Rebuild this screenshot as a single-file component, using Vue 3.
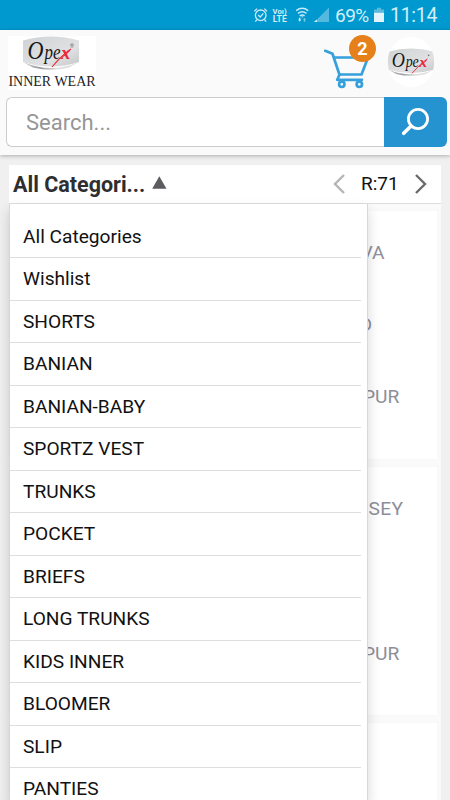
<script setup>
const categories = [
  'All Categories', 'Wishlist', 'SHORTS', 'BANIAN', 'BANIAN-BABY', 'SPORTZ VEST', 'TRUNKS',
  'POCKET', 'BRIEFS', 'LONG TRUNKS', 'KIDS INNER', 'BLOOMER', 'SLIP', 'PANTIES',
]
</script>

<template>
  <div class="screen">
    <div class="status">
      <svg class="status-icons" width="92" height="30" viewBox="0 0 92 30">
        <g fill="none" stroke="#c9eaf7" stroke-width="1.3">
          <circle cx="10.7" cy="15.3" r="5.3" />
          <path d="M8.2 15l2 2 3.2-3.600M4.400 11.200l2.700-2.600M17 11.200l-2.700-2.600M7 19.600l-1.700 2.100M14.400 19.600l1.700 2.100" />
          <path d="M46.200 10.600q6-4.600 12 0M48 13.300q4.200-3.200 8.400 0M49.800 15.900q2.400-1.900 4.800 0" stroke-width="1.500" />
        </g>
        <path d="M51 16.400h2.400l-1.200 1.400zM48 19.400h1v-1.600h1.400v1.600h1l-1.700 2.400z" fill="#c9eaf7" />
        <path d="M53 19.800l1.500-2 1.500 2h-.8v2h-1.400v-2z" fill="#7cc8e6" />
        <path d="M79 7.500V22H64.500z" fill="#55b8de" />
        <path d="M64 22l2.800-2.600V22z" fill="#e2f5fc" />
        <text class="volte" x="22.600" y="14" textLength="14" lengthAdjust="spacingAndGlyphs">Voı)</text>
        <text class="lte" x="22.800" y="22" textLength="14" lengthAdjust="spacingAndGlyphs">LTE</text>
      </svg>
      <span class="percent">69%</span>
      <svg class="battery" width="10" height="30" viewBox="0 0 10 30">
        <path d="M3 7.800h4v1.600H10V13H0V9.400h3z" fill="#5bb9dc" />
        <path d="M0 12.800h10V22H0z" fill="#e2f5fc" />
      </svg>
      <span class="clock">11:14</span>
    </div>

    <header class="header">
      <div class="brand-row">
        <div class="brand">
          <svg class="brand-logo" width="56" height="34" viewBox="0 0 56 34">
            <defs>
              <linearGradient id="plate" x1="0" y1="0" x2="1" y2="1">
                <stop offset="0" stop-color="#d0d3d5" />
                <stop offset=".65" stop-color="#dfe1e2" />
                <stop offset="1" stop-color="#c4c6c8" />
              </linearGradient>
              <linearGradient id="rim" x1="0" y1="0" x2="1" y2="0">
                <stop offset="0" stop-color="#c4c6c8" />
                <stop offset=".3" stop-color="#97999b" />
                <stop offset=".6" stop-color="#dcdedf" />
              </linearGradient>
            </defs>
            <path d="M0 26Q28 38 56 26L46 31.500Q28 36 10 31.500z" fill="url(#rim)" />
            <path d="M0 4.500Q28-3.500 56 4.500V26Q28 35 0 26z" fill="url(#plate)" />
            <path d="M48 13Q39 19 29 31" fill="none" stroke="#ed2b36" stroke-width="1.100" />
            <g class="wordmark">
              <text x="4.500" y="23" class="initial" textLength="16" lengthAdjust="spacingAndGlyphs">O</text>
              <text x="21.500" y="22.500" textLength="16" lengthAdjust="spacingAndGlyphs">pe</text>
              <text x="38" y="22.500" class="red">x</text>
            </g>
            <text x="47" y="12" class="registered">®</text>
          </svg>
          <span class="brand-name">INNER WEAR</span>
        </div>

        <div class="actions">
          <div class="cart">
            <svg width="50" height="56" viewBox="0 0 50 56">
              <g fill="none" stroke="#35a0dc" stroke-width="2.700" stroke-linecap="round" stroke-linejoin="round">
                <path d="M1.200 17.800l7.300 3 7 21-2.300 5H38" />
                <path d="M10.500 24.500h33.500l-6.500 17h-22" />
                <circle cx="17.800" cy="51.300" r="2.700" />
                <circle cx="35.300" cy="51.300" r="2.700" />
              </g>
            </svg>
            <span class="badge">2</span>
          </div>
          <div class="avatar">
            <svg width="46" height="28" viewBox="0 0 56 34">
              <path d="M0 26Q28 38 56 26L46 31.500Q28 36 10 31.500z" fill="url(#rim)" />
              <path d="M0 4.500Q28-3.500 56 4.500V26Q28 35 0 26z" fill="url(#plate)" />
              <path d="M48 13Q39 19 29 31" fill="none" stroke="#ed2b36" stroke-width="1.100" />
              <g class="wordmark">
                <text x="4.500" y="23" class="initial" textLength="16" lengthAdjust="spacingAndGlyphs">O</text>
                <text x="21.500" y="22.500" textLength="16" lengthAdjust="spacingAndGlyphs">pe</text>
                <text x="38" y="22.500" class="red">x</text>
              </g>
              <circle cx="49.500" cy="9" r="1" fill="#777" />
            </svg>
          </div>
        </div>
      </div>

      <div class="search">
        <div class="search-field">Search...</div>
        <button class="search-button" aria-label="Search">
          <svg width="30" height="30" viewBox="0 0 30 30">
            <circle cx="17" cy="12" r="9.600" fill="none" stroke="#fff" stroke-width="2.800" />
            <path d="M10.100 19L2.700 26.300" stroke="#fff" stroke-width="3.600" stroke-linecap="round" />
          </svg>
        </button>
      </div>
    </header>

    <main class="content">
      <div class="toolbar">
        <span class="selected">All Categori...</span>
        <svg class="caret" width="15" height="13" viewBox="0 0 15 13"><path d="M7.300.3L14.500 12.800H.2z" fill="#5c5c60" /></svg>
        <div class="pager">
          <svg width="12" height="20" viewBox="0 0 12 20"><path d="M11 1L2 10l9 9" fill="none" stroke="#b5b5b5" stroke-width="2.400" /></svg>
          <span>R:71</span>
          <svg width="12" height="20" viewBox="0 0 12 20"><path d="M1 1l9 9-9 9" fill="none" stroke="#6b6b6b" stroke-width="2.400" /></svg>
        </div>
      </div>

      <div class="panel">
        <div class="cards">
          <section class="card">
            <span class="va">VA</span><span class="d">D</span><span class="pur">PUR</span>
          </section>
          <section class="card">
            <span class="sey">SEY</span><span class="pur">PUR</span>
          </section>
          <section class="card"></section>
        </div>
        <ul class="menu">
          <li v-for="name in categories" :key="name">{{ name }}</li>
        </ul>
      </div>
    </main>
  </div>
</template>

<style>
body { margin: 0; overflow: hidden; }
</style>

<style scoped>
* { box-sizing: border-box; }
.screen {
  width: 450px; height: 800px; overflow: hidden;
  display: flex; flex-direction: column;
  background: #f0f0f0; color: #111;
  font-family: Roboto, "Liberation Sans", sans-serif;
}
.status {
  flex: none; height: 30px; padding-left: 250px;
  display: flex; align-items: center;
  background: #0099cf; color: #d3eff9; font-size: 19px; line-height: 30px;
}
.status-icons, .battery { flex: none; display: block; }
.volte { font-size: 7.5px; font-weight: 700; fill: #d3eff9; }
.lte { font-size: 8.5px; font-weight: 700; fill: #d3eff9; }
.percent { width: 38px; margin-left: -7px; padding-top: 1px; letter-spacing: -.5px; }
.battery { margin-left: 1px; }
.clock { margin-left: 6px; padding-top: 1px; font-size: 19.5px; letter-spacing: -.3px; }
.header {
  flex: none; height: 125px; position: relative; z-index: 2;
  background: #fafafa; box-shadow: 0 1px 4px rgba(0, 0, 0, .28);
}
.brand-row { height: 67.4px; display: flex; justify-content: space-between; padding: 6px 16px 0 8px; }
.brand { width: 88px; height: 54px; display: flex; flex-direction: column; align-items: center; background: #fff; }
.brand-logo { flex: none; margin-left: -2px; }
.brand-name { font: 14px/23px "Liberation Serif", serif; white-space: nowrap; color: #222; }
.wordmark { font: italic 21px "Liberation Serif", serif; fill: #161616; }
.initial { font-size: 25px; }
.red { fill: #e92936; font-weight: 700; font-size: 19px; }
.registered { font-size: 5px; fill: #666; }
.actions { display: flex; gap: 14px; }
.cart { position: relative; width: 50px; margin-top: -3px; }
.cart svg { display: block; }
.badge {
  position: absolute; left: 25px; top: 2px; width: 27px; height: 27px; border-radius: 50%;
  background: #e5801b; color: #fff; font-size: 18px; font-weight: 700; line-height: 28px; text-align: center;
}
.avatar {
  width: 46px; height: 50px; margin-top: 1px; border-radius: 23px; background: #fff;
  display: flex; align-items: center; justify-content: center; overflow: hidden;
}
.search { height: 50px; margin: 0 3px 0 6px; display: flex; }
.search-field {
  flex: 1; border: 1.5px solid #ccc; border-right: 0; border-radius: 6px 0 0 6px; background: #fff;
  padding-left: 19px; font-size: 22px; line-height: 49px; color: #969696;
}
.search-button {
  width: 62.6px; padding: 0; border: 0; border-radius: 0 6px 6px 0; background: #2693d1;
  display: flex; align-items: center; justify-content: center;
}
.content { flex: none; margin: 10px 9px 0; display: flex; flex-direction: column; }
.toolbar {
  height: 38px; padding: 0 14px 0 4px; display: flex; align-items: center; background: #fff;
}
.selected { width: 132px; font-size: 21.5px; font-weight: 700; white-space: nowrap; color: #2e2e31; }
.caret { margin-left: 7px; margin-top: -3px; }
.pager { margin-left: auto; display: flex; align-items: center; font-size: 19px; }
.pager span { width: 38px; margin: -1px 16px 0; white-space: nowrap; }
.panel { position: relative; height: 597px; border-top: 1px solid #dedede; background: #fafafa; }
.cards { padding: 7px 4px 0 0; display: flex; flex-direction: column; gap: 8px; }
.card {
  height: 248px; padding-top: 30px; background: #fff; display: flex; flex-direction: column; align-items: flex-start;
  font-size: 19.2px; line-height: 24px; color: #8e8e99; box-shadow: 0 0 4px rgba(0, 0, 0, .025);
}
.va { padding-left: 351.5px; margin-bottom: 48px; }
.d { padding-left: 350.5px; margin-bottom: 48px; }
.pur { padding-left: 354px; }
.sey { padding-left: 359.5px; margin-bottom: 121px; letter-spacing: .3px; }
.menu {
  position: absolute; left: 0; top: 0; width: 359px; height: 597px; margin: 0; padding: 11.8px 6px 0 0;
  overflow: hidden; list-style: none; background: #fff; border: solid #d8d8d8; border-width: 0 1px;
  box-shadow: 0 6px 12px rgba(0, 0, 0, .16);
}
.menu li {
  height: 42.5px; padding-left: 13px; border-bottom: 1px solid #dedede;
  font-size: 19.15px; line-height: 41.6px; white-space: nowrap;
}
</style>
